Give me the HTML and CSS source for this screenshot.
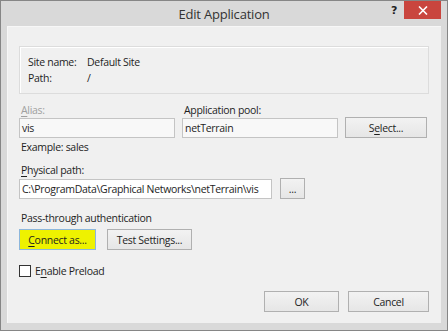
FILE: index.html
```html
<!DOCTYPE html>
<html lang="en">
  <head>
    <meta charset="utf-8" />
    <title>Edit Application</title>
    <link rel="stylesheet" href="styles.css">
  </head>
  <body>
    <div class="window">
      <!-- title bar -->
      <div class="titlebar">
        <span></span>
        <span class="title">Edit Application</span>
        <span class="controls">
          <span class="help">?</span>
          <span class="close">
            <svg width="10" height="9" viewBox="0 0 10 9">
              <path d="M1 0.5 L9 8.5 M9 0.5 L1 8.5" stroke="#fff" stroke-width="1.6" />
            </svg>
          </span>
        </span>
      </div>

      <div class="client">
        <div class="site-box">
          <div class="site-row"><span class="site-label">Site name:</span><span>Default Site</span></div>
          <div class="site-row"><span class="site-label">Path:</span><span>/</span></div>
        </div>

        <div class="field-row">
          <div class="col">
            <div class="label disabled"><u>A</u>lias:</div>
            <div class="input grey">vis</div>
          </div>
          <div class="col">
            <div class="label">Application pool:</div>
            <div class="input grey">netTerrain</div>
          </div>
          <div class="col col-btn">
            <button class="btn select-btn">S<u>e</u>lect...</button>
          </div>
        </div>

        <div class="hint">Example: sales</div>

        <div class="label path-label"><u>P</u>hysical path:</div>
        <div class="path-row">
          <div class="input path-input">C:\ProgramData\Graphical Networks\netTerrain\vis</div>
          <button class="btn dots-btn">...</button>
        </div>

        <div class="label auth-label">Pass-through authentication</div>
        <div class="auth-row">
          <button class="btn connect-btn"><u>C</u>onnect as...</button>
          <button class="btn test-btn">Test Settings...</button>
        </div>

        <div class="check-row">
          <span class="checkbox"></span>
          <span>E<u>n</u>able Preload</span>
        </div>

        <div class="footer">
          <button class="btn ok-btn">OK</button>
          <button class="btn cancel-btn">Cancel</button>
        </div>
      </div>
    </div>
  </body>
</html>
```

FILE: styles.css
```css
* {
  box-sizing: border-box;
}

body {
  margin: 0;
  font-family: 'Open Sans', sans-serif;
  font-size: 10.5px;
  letter-spacing: -0.3px;
  color: #1e1e1e;
  background-color: #ffffff;
}

u {
  text-decoration-thickness: 1px;
  text-underline-offset: 2px;
}

.window {
  width: 448px;
  height: 331px;
  border: 1px solid #868686;
  background-color: #d9d9d9;
  padding: 0 6px 7px 6px;
}

/* title bar */
.titlebar {
  height: 25px;
  display: grid;
  grid-template-columns: 1fr auto 1fr;
  margin: 0 -6px;
}

.title {
  font-size: 13px;
  letter-spacing: -0.2px;
  color: #333;
  line-height: 27px;
}

.controls {
  display: flex;
  justify-content: flex-end;
  align-items: flex-start;
  padding-right: 6px;
}

.help {
  font-family: 'DejaVu Sans', sans-serif;
  font-weight: bold;
  font-size: 11px;
  color: #222;
  margin-top: 3px;
  margin-right: 7px;
}

.close {
  width: 37px;
  height: 18px;
  background-color: #c9453e;
  display: flex;
  align-items: center;
  justify-content: center;
}

/* client area */
.client {
  height: 297px;
  background-color: #f0f0f0;
  border-top: 1px solid #f7f7f7;
  border-left: 1px solid #f7f7f7;
  padding: 19px 12px 0 11px;
}

.site-box {
  height: 48px;
  border: 1px solid #dcdcdc;
  box-shadow: inset 1px 1px 0 #ffffff;
  padding: 7px 8px 0 8px;
}

.site-row {
  display: flex;
  line-height: 16px;
}

.site-label {
  width: 59px;
}

.field-row {
  display: flex;
  gap: 7px;
  margin-top: 8px;
}

.col {
  width: 156px;
}

.col-btn {
  width: 82px;
  padding-top: 15px;
}

.label {
  line-height: 16px;
  padding-left: 2px;
}

.disabled {
  color: #a0a0a0;
}

.input {
  height: 20px;
  border: 1px solid #c4c4c4;
  background-color: #ffffff;
  line-height: 18px;
  padding-left: 2px;
  white-space: nowrap;
  overflow: hidden;
}

.input.grey {
  background-color: #f8f8f8;
}

.btn {
  font-family: 'Open Sans', sans-serif;
  font-size: 10.5px;
  letter-spacing: -0.3px;
  color: #1e1e1e;
  height: 21px;
  border: 1px solid #b0b0b0;
  background: linear-gradient(#f2f2f2, #e6e6e6);
  padding: 0;
  margin: 0;
  line-height: 18px;
}

.select-btn {
  width: 82px;
}

.hint {
  line-height: 16px;
  margin-top: 1px;
  padding-left: 2px;
}

.path-label {
  margin-top: 7px;
}

.path-row {
  display: flex;
  gap: 8px;
  align-items: center;
}

.path-input {
  width: 253px;
}

.dots-btn {
  width: 25px;
}

.auth-label {
  margin-top: 11px;
}

.auth-row {
  display: flex;
  gap: 11px;
  margin-top: 3px;
}

.connect-btn {
  width: 77px;
  background: #eef200;
  border-color: #8cb6dc;
}

.test-btn {
  width: 85px;
}

.check-row {
  display: flex;
  align-items: center;
  gap: 4px;
  margin-top: 13px;
  line-height: 16px;
}

.checkbox {
  width: 12px;
  height: 12px;
  border: 1px solid #333;
  background-color: #ffffff;
}

.footer {
  display: flex;
  justify-content: flex-end;
  gap: 9px;
  margin-top: 12px;
}

.ok-btn {
  width: 75px;
}

.cancel-btn {
  width: 81px;
}
```
